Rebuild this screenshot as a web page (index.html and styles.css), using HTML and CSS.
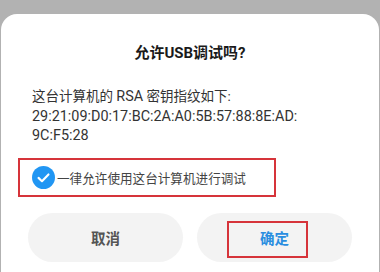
FILE: index.html
```html
<!DOCTYPE html>
<html lang="zh-CN">

<head>
    <meta charset="UTF-8">
    <meta name="viewport" content="width=device-width, initial-scale=1.0">
    <title>允许USB调试吗?</title>
    <link rel="stylesheet" href="styles.css">
</head>

<body>
    <div class="dialog">
        <h2 class="dialog-title">允许USB调试吗?</h2>
        <p class="dialog-text">这台计算机的 <span class="latin">RSA</span> 密钥指纹如下:<br><span class="latin">29:21:09:D0:17:BC:2A:A0:5B:57:88:8E:AD:<br>9C:F5:28</span></p>
        <label class="check-row">
            <span class="check-icon">
                <svg width="23" height="23" viewBox="0 0 24 24">
                    <circle cx="12" cy="12" r="12" fill="#2196f3" />
                    <path d="M6.8 12.4l3.6 3.4 6.8-7" fill="none" stroke="#fff" stroke-width="2.2" stroke-linecap="round" stroke-linejoin="round" />
                </svg>
            </span>
            <span class="check-label">一律允许使用这台计算机进行调试</span>
        </label>
        <div class="dialog-actions">
            <button class="btn btn-cancel">取消</button>
            <button class="btn btn-ok">确定<span class="mark"></span></button>
        </div>
    </div>
</body>

</html>
```

FILE: styles.css
```css
/* Page */
body {
    margin: 0;
    background: #b2b2b2;
    font-family: Roboto, "Noto Sans CJK SC", sans-serif;
    height: 272px;
    overflow: hidden;
}

/* Dialog card */
.dialog {
    margin: 14px 1px 0;
    height: 258px;
    background: #ffffff;
    border-radius: 16px 16px 0 0;
    padding: 29px 0 0;
    box-sizing: border-box;
}

.dialog-title {
    margin: 0;
    font-size: 15px;
    line-height: 20px;
    font-weight: 700;
    text-align: center;
    color: #1a1a1a;
}

.dialog-text {
    margin: 24px 0 0 31px;
    font-size: 13.5px;
    line-height: 18.5px;
    color: #333;
}

.latin {
    font-size: 14.4px;
}

/* Checkbox row */
.check-row {
    display: flex;
    align-items: center;
    margin: 12px 0 0 17px;
    width: 258px;
    height: 39px;
    box-sizing: border-box;
    border: 2px solid #d6343a;
    padding-left: 12px;
}

.check-icon {
    display: flex;
    width: 23px;
    height: 23px;
    margin-right: 2px;
}

.check-label {
    font-size: 12.6px;
    color: #444;
}

/* Buttons */
.dialog-actions {
    display: flex;
    gap: 14px;
    margin: 16px 0 0 27px;
}

.btn {
    position: relative;
    width: 155px;
    height: 49px;
    border: none;
    border-radius: 25px;
    background: #f3f3f3;
    font-family: inherit;
    font-size: 14.5px;
    font-weight: 700;
    padding: 0;
}

.btn-cancel {
    color: #555;
}

.btn-ok {
    color: #2a8ee0;
}

.btn-ok .mark {
    position: absolute;
    left: 30px;
    top: 8px;
    width: 81px;
    height: 37px;
    box-sizing: border-box;
    border: 2px solid #d6343a;
}
```
